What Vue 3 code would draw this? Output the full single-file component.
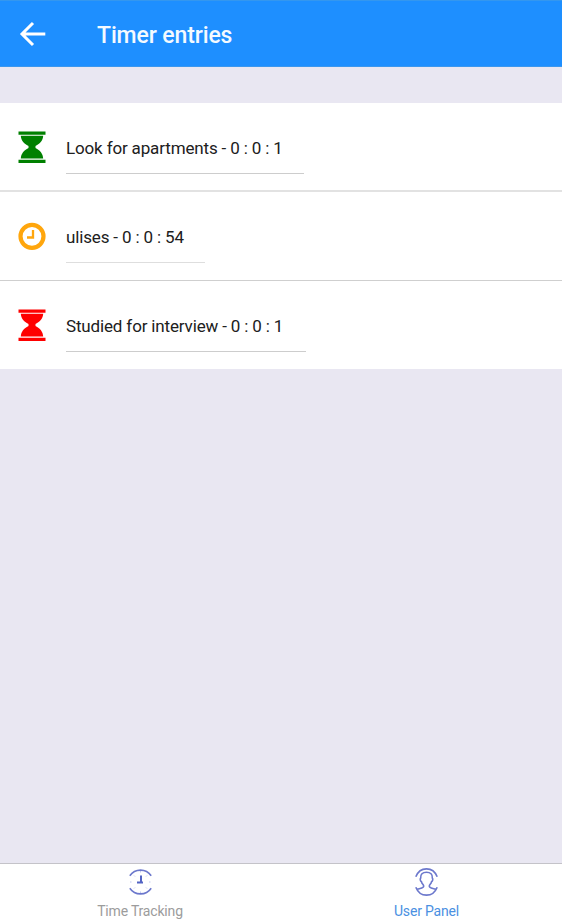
<script setup>
const entries = [
  { text: 'Look for apartments - 0 : 0 : 1', icon: 'hourglass', tone: 'green', size: 'first' },
  { text: 'ulises - 0 : 0 : 54', icon: 'clock', tone: 'orange', size: 'second' },
  { text: 'Studied for interview - 0 : 0 : 1', icon: 'hourglass', tone: 'red', size: 'third' },
]
</script>

<template>
  <div class="screen">
    <header class="bar">
      <svg class="back" width="28" height="28" viewBox="0 0 28 28">
        <path d="M14 2 3 13l11 11M3.200 13H26.300" />
      </svg>
      <h1>Timer entries</h1>
    </header>
    <main class="list">
      <div v-for="e in entries" :key="e.text" class="row" :class="e.size">
        <svg v-if="e.icon === 'hourglass'" class="icon" :class="e.tone" width="28" height="32" viewBox="0 0 28 32">
          <path d="M.5.500h27v3.200H.5zM.5 28.800h27V32H.5zM2.800 4.800h22.400c-.3 5-3 7.800-7.700 10.300v2c4.700 2.500 7.400 5.500 7.700 10.500H2.800c.3-5 3-8 7.700-10.500v-2C5.800 12.600 3.100 9.800 2.800 4.800z" />
        </svg>
        <svg v-else class="icon clock" :class="e.tone" width="28" height="32" viewBox="0 0 28 32">
          <circle cx="14" cy="16.300" r="11.500" stroke-width="4.200" />
          <path d="M15 10v7.500H9" stroke-width="2.300" />
        </svg>
        <div class="field">{{ e.text }}</div>
      </div>
    </main>
    <nav class="tabs">
      <div class="tab">
        <svg width="26" height="28" viewBox="0 0 26 28">
          <path d="M2.800 7.800A12.900 12.900 0 0 1 24.200 7.800M2.800 20.200A12.900 12.900 0 0 0 24.200 20.200" />
          <path class="thick" d="M14 7.500v7H10M14 14.500h2" />
          <path class="ticks" d="M13.500 3v1.500M13.500 23.500V25M3 14h1.500M22 14h1.500M7 7.500l1 1M19 19.500l1 1M7 20.500l1-1M19 8.500l1-1" />
        </svg>
        <span>Time Tracking</span>
      </div>
      <div class="tab active">
        <svg width="26" height="28" viewBox="0 0 26 28">
          <path d="M1.800 8.800C6-1.800 19-1.800 23.200 8.800M1.800 19.200C6 29.800 19 29.800 23.200 19.200" />
          <path d="M3.200 21.300c2.500-1.200 6.300-.9 6.500-3.100.1-1.500-1.800-2.100-2.200-4.400-1.500-.8-1.500-3-.8-3.800C6.300 6.300 8.500 4.300 12.500 4.300s6.200 2 5.800 5.700c.7.800.7 3-.8 3.800-.4 2.300-2.300 2.900-2.200 4.400.2 2.200 4 1.900 6.500 3.100" />
        </svg>
        <span>User Panel</span>
      </div>
    </nav>
  </div>
</template>

<style>
body {
  margin: 0;
}
</style>

<style scoped>
.screen {
  height: 920px;
  display: flex;
  flex-direction: column;
  background: #e9e7f2;
  font-family: Roboto, sans-serif;
  overflow: hidden;
}
.bar {
  height: 67px;
  box-sizing: border-box;
  flex: none;
  display: flex;
  align-items: center;
  padding: 2px 0 0 19px;
  background: #1e8fff;
  border-top: 1px solid #3497ef;
  border-bottom: 1px solid #3b97ee;
}
.back {
  fill: none;
  stroke: #fff;
  stroke-width: 3;
}
h1 {
  margin: 2px 0 0 50px;
  font-size: 23px;
  font-weight: 500;
  letter-spacing: -0.13px;
  line-height: 30px;
  color: #f4faff;
}
.list {
  margin-top: 36px;
  flex: 1;
}
.row {
  height: 89px;
  box-sizing: border-box;
  display: flex;
  align-items: flex-start;
  padding: 28px 18px 0;
  background: #fff;
  border-bottom: 1px solid #cfcfcf;
}
.row.first {
  border-bottom: 2px solid #e2e2e2;
}
.row.third {
  height: 88px;
  border-bottom: 0;
}
.icon {
  flex: none;
  margin-right: 20px;
}
.green {
  fill: #008000;
}
.red {
  fill: #fe0000;
}
.clock {
  fill: none;
  stroke: #ffa60d;
}
.field {
  height: 43px;
  box-sizing: border-box;
  padding-top: 7px;
  border-bottom: 1px solid #cdcdcd;
  font-size: 17px;
  letter-spacing: -0.15px;
  line-height: 20px;
  color: #202020;
  white-space: nowrap;
}
.first .field {
  width: 238px;
}
.second .field {
  width: 139px;
  border-color: #dedede;
}
.third .field {
  width: 240px;
}
.tabs {
  height: 57px;
  box-sizing: border-box;
  flex: none;
  display: flex;
  border-top: 1px solid #c4c3c9;
  background: #fff;
}
.tab {
  width: 280px;
  flex: none;
  display: flex;
  flex-direction: column;
  align-items: center;
  padding-top: 4px;
  font-size: 14px;
  letter-spacing: -0.18px;
  line-height: 18px;
  color: #9c9c9c;
}
.tab.active {
  width: 293px;
  color: #4a90e2;
}
.tab span {
  margin-top: 6px;
}
.tab svg {
  flex: none;
  fill: none;
  stroke: #6c78cc;
  stroke-width: 1.6;
}
.tab .thick {
  stroke: #5364c4;
  stroke-width: 2;
}
.tab .ticks {
  stroke: #c3c8ef;
  stroke-width: 1;
}
</style>
